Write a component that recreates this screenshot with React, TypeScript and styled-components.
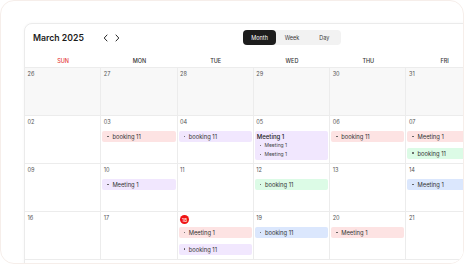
import React from 'react';
import styled, { createGlobalStyle } from 'styled-components';

const GlobalStyle = createGlobalStyle`
  * {
    box-sizing: border-box;
  }
  body {
    margin: 0;
    background: #ffffff;
    font-family: Inter, "Noto Sans", sans-serif;
    color: #2b2b2b;
  }
`;

type Tone = 'pink' | 'lavender' | 'green' | 'blue';

const toneColors: Record<Tone, string> = {
  pink: '#fde3e3',
  lavender: '#f1e7fe',
  green: '#dcfbe6',
  blue: '#dbe7fd',
};

const Frame = styled.div`
  width: 464px;
  height: 264px;
  border: 1px solid #f6eeea;
  border-radius: 14px;
  overflow: hidden;
  padding: 22px 0 0 23px;
  display: flex;
  align-items: flex-start;
  background: #ffffff;
`;

const Card = styled.div`
  width: 536px;
  min-height: 260px;
  flex-shrink: 0;
  border: 1px solid #ebebeb;
  border-radius: 8px 8px 0 0;
  background: #ffffff;
  box-shadow: 0 0 3px rgba(0, 0, 0, 0.04);
`;

const Toolbar = styled.div`
  display: grid;
  grid-template-columns: 1fr auto 1fr;
  align-items: center;
  padding: 6px 8px 0;
`;

const TitleGroup = styled.div`
  display: flex;
  align-items: center;
`;

const Title = styled.div`
  font-size: 8.7px;
  font-weight: 600;
  color: #1c1c1c;
`;

const NavGroup = styled.div`
  display: flex;
  align-items: center;
  gap: 7px;
  margin-left: 19px;
`;

const NavButton = styled.span`
  display: flex;
  width: 5px;
  height: 8px;
  align-items: center;
  justify-content: center;
`;

const Segmented = styled.div`
  display: flex;
  height: 15px;
  background: #f2f2f2;
  border-radius: 4px;
`;

const SegmentButton = styled.div<{ $active?: boolean }>`
  width: 32.4px;
  display: flex;
  align-items: center;
  justify-content: center;
  font-size: 5.5px;
  border-radius: 4px;
  color: ${(p) => (p.$active ? '#ffffff' : '#3a3a3a')};
  background: ${(p) => (p.$active ? '#1d1d1d' : 'transparent')};
`;

const WeekHeader = styled.div`
  display: grid;
  grid-template-columns: repeat(7, 1fr);
  height: 23px;
  align-items: end;
  padding-bottom: 2px;
  border-bottom: 1px solid #ececec;
`;

const DayLabel = styled.div<{ $weekend?: boolean }>`
  text-align: center;
  font-size: 5.5px;
  line-height: 7px;
  font-weight: 500;
  color: ${(p) => (p.$weekend ? '#e53935' : '#333333')};
`;

const Grid = styled.div`
  display: grid;
  grid-template-columns: repeat(7, 1fr);
  grid-auto-rows: 48px;
`;

const Cell = styled.div<{ $muted?: boolean }>`
  display: flex;
  flex-direction: column;
  padding: 3px 1px 0;
  border-right: 1px solid #ececec;
  border-bottom: 1px solid #ececec;
  background: ${(p) => (p.$muted ? '#f8f8f8' : '#ffffff')};
  min-width: 0;
`;

const DateRow = styled.div`
  display: flex;
  align-items: center;
  height: 7px;
  padding-left: 1.5px;
  margin-bottom: 5px;
`;

const DateNumber = styled.span`
  font-size: 5.6px;
  line-height: 7px;
  color: #555555;
`;

const TodayBadge = styled.span`
  width: 9px;
  height: 9px;
  border-radius: 50%;
  background: #f01414;
  color: #ffffff;
  font-size: 5px;
  display: flex;
  align-items: center;
  justify-content: center;
  margin-top: 2px;
`;

const EventList = styled.div`
  display: flex;
  flex-direction: column;
  gap: 5.5px;
`;

const EventPill = styled.div<{ $tone: Tone }>`
  height: 11px;
  border-radius: 2px;
  display: flex;
  align-items: center;
  gap: 3.5px;
  padding-left: 5px;
  background: ${(p) => toneColors[p.$tone]};
  font-size: 5.8px;
  color: #333333;
  white-space: nowrap;
`;

const Dot = styled.span`
  width: 1.6px;
  height: 1.6px;
  border-radius: 50%;
  background: #555555;
  flex-shrink: 0;
`;

const EventGroup = styled.div<{ $tone: Tone }>`
  border-radius: 2px;
  padding: 2px 3px 1px 2px;
  background: ${(p) => toneColors[p.$tone]};
`;

const GroupTitle = styled.div`
  font-size: 6px;
  line-height: 8px;
  font-weight: 500;
  color: #222222;
`;

const GroupItem = styled.div`
  display: flex;
  align-items: center;
  gap: 3px;
  padding-left: 3px;
  font-size: 5px;
  line-height: 9px;
  color: #444444;
`;

type Ev = { label: string; tone: Tone; items?: string[] };
type Day = { n: string; muted?: boolean; today?: boolean; events?: Ev[] };

const weeks: Day[][] = [
  [
    { n: '26', muted: true },
    { n: '27', muted: true },
    { n: '28', muted: true },
    { n: '29', muted: true },
    { n: '30', muted: true },
    { n: '31', muted: true },
    { n: '01' },
  ],
  [
    { n: '02' },
    { n: '03', events: [{ label: 'booking 11', tone: 'pink' }] },
    { n: '04', events: [{ label: 'booking 11', tone: 'lavender' }] },
    {
      n: '05',
      events: [{ label: 'Meeting 1', tone: 'lavender', items: ['Meeting 1', 'Meeting 1'] }],
    },
    { n: '06', events: [{ label: 'booking 11', tone: 'pink' }] },
    {
      n: '07',
      events: [
        { label: 'Meeting 1', tone: 'pink' },
        { label: 'booking 11', tone: 'green' },
      ],
    },
    { n: '08' },
  ],
  [
    { n: '09' },
    { n: '10', events: [{ label: 'Meeting 1', tone: 'lavender' }] },
    { n: '11' },
    { n: '12', events: [{ label: 'booking 11', tone: 'green' }] },
    { n: '13' },
    { n: '14', events: [{ label: 'Meeting 1', tone: 'blue' }] },
    { n: '15' },
  ],
  [
    { n: '16' },
    { n: '17' },
    {
      n: '18',
      today: true,
      events: [
        { label: 'Meeting 1', tone: 'pink' },
        { label: 'booking 11', tone: 'lavender' },
      ],
    },
    { n: '19', events: [{ label: 'booking 11', tone: 'blue' }] },
    { n: '20', events: [{ label: 'Meeting 1', tone: 'pink' }] },
    { n: '21' },
    { n: '22' },
  ],
];

const labels = ['SUN', 'MON', 'TUE', 'WED', 'THU', 'FRI', 'SAT'];

const Chevron = ({ dir }: { dir: 'left' | 'right' }) => (
  <svg width="5" height="8" viewBox="0 0 5 8" fill="none">
    <path
      d={dir === 'left' ? 'M4 1 L1.2 4 L4 7' : 'M1 1 L3.8 4 L1 7'}
      stroke="#2a2a2a"
      strokeWidth="1"
      strokeLinecap="round"
      strokeLinejoin="round"
    />
  </svg>
);

const EventView = ({ ev }: { ev: Ev }) =>
  ev.items ? (
    <EventGroup $tone={ev.tone}>
      <GroupTitle>{ev.label}</GroupTitle>
      {ev.items.map((it, i) => (
        <GroupItem key={i}>
          <Dot />
          {it}
        </GroupItem>
      ))}
    </EventGroup>
  ) : (
    <EventPill $tone={ev.tone}>
      <Dot />
      {ev.label}
    </EventPill>
  );

export default function App() {
  return (
    <>
      <GlobalStyle />
      <Frame>
        <Card>
          <Toolbar>
            <TitleGroup>
              <Title>March 2025</Title>
              <NavGroup>
                <NavButton>
                  <Chevron dir="left" />
                </NavButton>
                <NavButton>
                  <Chevron dir="right" />
                </NavButton>
              </NavGroup>
            </TitleGroup>
            <Segmented>
              <SegmentButton $active>Month</SegmentButton>
              <SegmentButton>Week</SegmentButton>
              <SegmentButton>Day</SegmentButton>
            </Segmented>
            <div />
          </Toolbar>
          <WeekHeader>
            {labels.map((l) => (
              <DayLabel key={l} $weekend={l === 'SUN'}>
                {l}
              </DayLabel>
            ))}
          </WeekHeader>
          <Grid>
            {weeks.flat().map((d, i) => (
              <Cell key={i} $muted={d.muted}>
                <DateRow>
                  {d.today ? <TodayBadge>{d.n}</TodayBadge> : <DateNumber>{d.n}</DateNumber>}
                </DateRow>
                {d.events && (
                  <EventList>
                    {d.events.map((ev, j) => (
                      <EventView key={j} ev={ev} />
                    ))}
                  </EventList>
                )}
              </Cell>
            ))}
          </Grid>
        </Card>
      </Frame>
    </>
  );
}
